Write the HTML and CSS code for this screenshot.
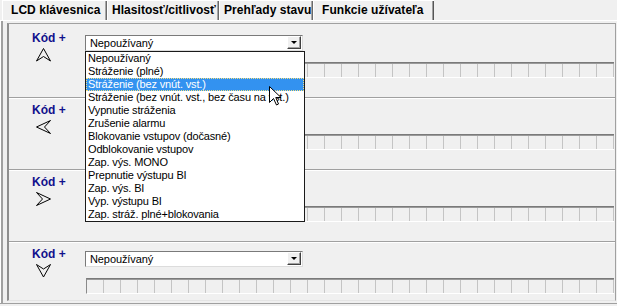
FILE: index.html
```html
<!DOCTYPE html>
<html>
<head>
<meta charset="utf-8">
<link rel="stylesheet" href="styles.css">
</head>
<body>
<div class="window">
  <div class="tabs">
    <div class="tab t1">LCD klávesnica</div>
    <div class="tab t2">Hlasitosť/citlivosť</div>
    <div class="tab t3">Prehľady stavu</div>
    <div class="tab t4 active">Funkcie užívateľa</div>
  </div>
  <div class="panel">
    <div class="frame">
      <div class="row first">
        <div class="left">
          <div class="kod">Kód +</div>
          <svg class="arrow" viewBox="0 0 15 14" width="15" height="14"><path d="M7.5 0.5 L14.5 13 L7.5 8.5 L0.5 13 Z"/></svg>
        </div>
        <div class="right">
          <div class="combo"><span class="val">Nepoužívaný</span><span class="btn"><i class="tri"></i></span></div>
          <div class="grid"></div>
        </div>
      </div>
      <div class="row">
        <div class="left">
          <div class="kod">Kód +</div>
          <svg class="arrow" viewBox="0 0 15 14" width="15" height="14"><path d="M0.5 7 L14.5 0.5 L8.5 7 L14.5 13.5 Z"/></svg>
        </div>
        <div class="right">
          <div class="combo covered"><span class="val">Nepoužívaný</span><span class="btn"><i class="tri"></i></span></div>
          <div class="grid"></div>
        </div>
      </div>
      <div class="row">
        <div class="left">
          <div class="kod">Kód +</div>
          <svg class="arrow" viewBox="0 0 15 14" width="15" height="14"><path d="M14.5 7 L0.5 0.5 L6.5 7 L0.5 13.5 Z"/></svg>
        </div>
        <div class="right">
          <div class="combo covered"><span class="val">Nepoužívaný</span><span class="btn"><i class="tri"></i></span></div>
          <div class="grid"></div>
        </div>
      </div>
      <div class="row">
        <div class="left">
          <div class="kod">Kód +</div>
          <svg class="arrow" viewBox="0 0 15 14" width="15" height="14"><path d="M7.5 13 L0.5 0.5 L7.5 5 L14.5 0.5 Z"/></svg>
        </div>
        <div class="right">
          <div class="combo"><span class="val">Nepoužívaný</span><span class="btn"><i class="tri"></i></span></div>
          <div class="grid"></div>
        </div>
      </div>
    </div>
  </div>
  <ul class="list">
    <li>Nepoužívaný</li>
    <li>Stráženie (plné)</li>
    <li class="sel">Stráženie (bez vnút. vst.)</li>
    <li>Stráženie (bez vnút. vst., bez času na vst.)</li>
    <li>Vypnutie stráženia</li>
    <li>Zrušenie alarmu</li>
    <li>Blokovanie vstupov (dočasné)</li>
    <li>Odblokovanie vstupov</li>
    <li>Zap. výs. MONO</li>
    <li>Prepnutie výstupu BI</li>
    <li>Zap. výs. BI</li>
    <li>Vyp. výstupu BI</li>
    <li>Zap. stráž. plné+blokovania</li>
  </ul>
  <svg class="cursor" width="13" height="20" viewBox="0 0 13 20"><path d="M0.5 0.5 L0.5 16.5 L4.5 12.5 L7.5 19 L9.5 18 L6.8 11.5 L12 11.5 Z"/></svg>
</div>
</body>
</html>
```
FILE: styles.css
```css
html, body {
  margin: 0;
  padding: 0;
}
body {
  width: 617px;
  height: 306px;
  overflow: hidden;
  background: #f0f0f0;
  font-family: "Liberation Sans", Arial, sans-serif;
}
.window {
  position: relative;
  width: 617px;
  height: 306px;
}
.tabs {
  display: flex;
  height: 20px;
  padding-left: 2px;
}
.tab {
  flex: none;
  box-sizing: border-box;
  height: 20px;
  line-height: 20px;
  font-size: 12px;
  font-weight: bold;
  letter-spacing: 0.05px;
  color: #000;
  white-space: nowrap;
  box-shadow: inset 1px 1px #ffffff, inset -1px 0 #6a6a6a, inset -2px 0 #a8a8a8;
}
.t1 { width: 105px; padding-left: 9px; }
.t2 { width: 112px; padding-left: 5px; }
.t3 { width: 94px; padding-left: 5px; }
.t4 { width: 121px; padding-left: 9px; }
.tab.active {
  box-shadow: inset 1px 1px #ffffff, inset -1px 0 #555, inset -2px 0 #a0a0a0;
}
.panel {
  box-sizing: border-box;
  height: 284px;
  border-top: 1px solid #ffffff;
  border-bottom: 1px solid #a0a0a0;
  padding: 2px 0 2px 7px;
  box-shadow: inset 1px 0 #ffffff, inset 3px 0 #a0a0a0;
}
.frame {
  box-sizing: border-box;
  width: 609px;
  height: 278px;
  overflow: hidden;
  border-top: 1px solid #a0a0a0;
  border-left: 2px solid #8e8e8e;
  border-right: 1px solid #a0a0a0;
  border-bottom: 1px solid #e4e4e4;
  padding-top: 1px;
}
.row {
  display: flex;
  box-sizing: border-box;
  height: 72px;
  flex: none;
  border-top: 1px solid #a0a0a0;
  box-shadow: inset 0 1px #ffffff;
}
.row.first {
  border-top-color: transparent;
  box-shadow: none;
}
.left {
  width: 76px;
  flex: none;
  padding-top: 5px;
}
.kod {
  padding-left: 23px;
  font-size: 12px;
  font-weight: bold;
  line-height: 14px;
  color: #10108c;
}
.arrow {
  display: block;
  margin: 3px 0 0 27px;
  fill: none;
  stroke: #000;
  stroke-width: 1;
}
.right {
  flex: 1;
  padding-top: 9px;
}
.combo {
  position: relative;
  box-sizing: border-box;
  width: 218px;
  height: 16px;
  background: #ffffff;
  border: 1px solid;
  border-color: #7a7a7a #dcdcdc #dcdcdc #7a7a7a;
  font-size: 11px;
  line-height: 14px;
  letter-spacing: -0.1px;
}
.combo.covered {
  visibility: hidden;
}
.val {
  padding-left: 4px;
  color: #000;
}
.btn {
  position: absolute;
  right: 1px;
  top: 0;
  width: 14px;
  height: 13px;
  box-sizing: border-box;
  background: #f0f0f0;
  border: 1px solid;
  border-color: #ffffff #404040 #404040 #ffffff;
  box-shadow: inset -1px -1px #a0a0a0;
  display: flex;
  align-items: center;
  justify-content: center;
}
.tri {
  display: block;
  width: 0;
  height: 0;
  border-left: 3px solid transparent;
  border-right: 3px solid transparent;
  border-top: 3px solid #000;
  margin-left: -1px;
}
.grid {
  box-sizing: border-box;
  width: 528px;
  height: 16px;
  margin: 11px 0 0 1px;
  border-top: 1px solid #7a7a7a;
  border-left: 1px solid #8a8a8a;
  border-bottom: 1px solid #ffffff;
  box-shadow: inset 0 1px #9a9a9a;
  background: repeating-linear-gradient(to right, transparent 0 16px, #c4c4c4 16px 17px);
}
.list {
  position: absolute;
  left: 85px;
  top: 51px;
  width: 220px;
  box-sizing: border-box;
  margin: 0;
  padding: 0;
  list-style: none;
  background: #ffffff;
  border: 1px solid #1a1a1a;
  font-size: 11px;
  letter-spacing: -0.15px;
}
.list li {
  height: 13px;
  line-height: 13px;
  padding-left: 2px;
  white-space: nowrap;
  color: #000;
}
.list li.sel {
  background: #3392f0;
  color: #ffffff;
  outline: 1px dotted #f4e080;
  outline-offset: -1px;
}
.cursor {
  position: absolute;
  left: 269px;
  top: 86px;
  fill: #ffffff;
  stroke: #000;
  stroke-width: 1;
}
```
